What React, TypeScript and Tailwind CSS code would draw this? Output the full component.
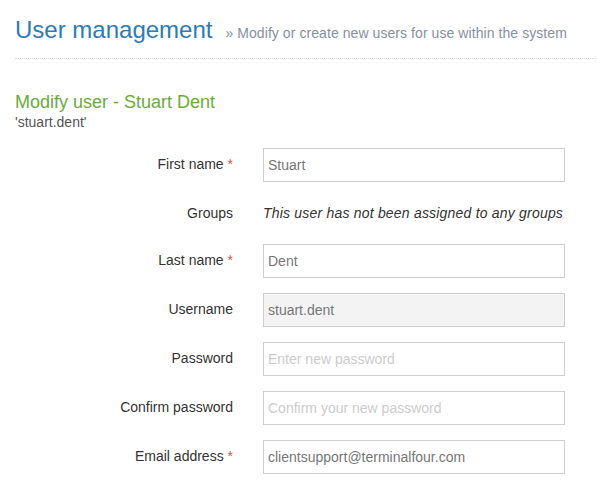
import React from "react";

const font = { fontFamily: '"Liberation Sans", Arial, sans-serif' };

function Label({ text, required }: { text: string; required?: boolean }) {
  return (
    <div className="w-[218px] shrink-0 text-right text-[14px] leading-[20px] text-[#333]">
      {text}
      {required && <span className="text-[#d9534f]"> *</span>}
    </div>
  );
}

function Field({
  label,
  required,
  value,
  placeholder,
  disabled,
}: {
  label: string;
  required?: boolean;
  value?: string;
  placeholder?: string;
  disabled?: boolean;
}) {
  return (
    <div className="flex h-[34px] items-center">
      <div className="-mt-[2px]">
        <Label text={label} required={required} />
      </div>
      <input
        className={`ml-[30px] box-border h-[34px] w-[302px] border border-[#cfcfcf] pl-[4px] text-[14px] text-[#777] outline-none placeholder:text-[#ccc] ${
          disabled ? "bg-[#f3f3f3]" : "bg-white"
        }`}
        style={font}
        defaultValue={value}
        placeholder={placeholder}
        readOnly={disabled}
      />
    </div>
  );
}

export default function App() {
  return (
    <div className="min-h-[494px] w-[597px] bg-white pl-[15px]" style={font}>
      <div className="flex items-baseline border-b border-dotted border-[#d6d6d6] pt-[17px] pb-[15px]">
        <h1 className="text-[24px] leading-[26px] text-[#2b7bba]">User management</h1>
        <span className="ml-[13px] text-[14px] leading-[20px] tracking-[0.07px] text-[#8690a5]">
          » Modify or create new users for use within the system
        </span>
      </div>
      <h2 className="mt-[33px] text-[18px] leading-[20px] text-[#69ac3c]">Modify user - Stuart Dent</h2>
      <div className="text-[14px] leading-[20px] text-[#555]">'stuart.dent'</div>
      <div className="mt-[16px] flex flex-col gap-[15px]">
        <Field label="First name" required value="Stuart" />
        <div className="flex h-[32px] items-center">
          <Label text="Groups" />
          <div className="ml-[30px] text-[14px] italic leading-[20px] tracking-[0.2px] text-[#333]">
            This user has not been assigned to any groups
          </div>
        </div>
        <Field label="Last name" required value="Dent" />
        <Field label="Username" value="stuart.dent" disabled />
        <Field label="Password" placeholder="Enter new password" />
        <Field label="Confirm password" placeholder="Confirm your new password" />
        <Field label="Email address" required value="clientsupport@terminalfour.com" />
      </div>
    </div>
  );
}
